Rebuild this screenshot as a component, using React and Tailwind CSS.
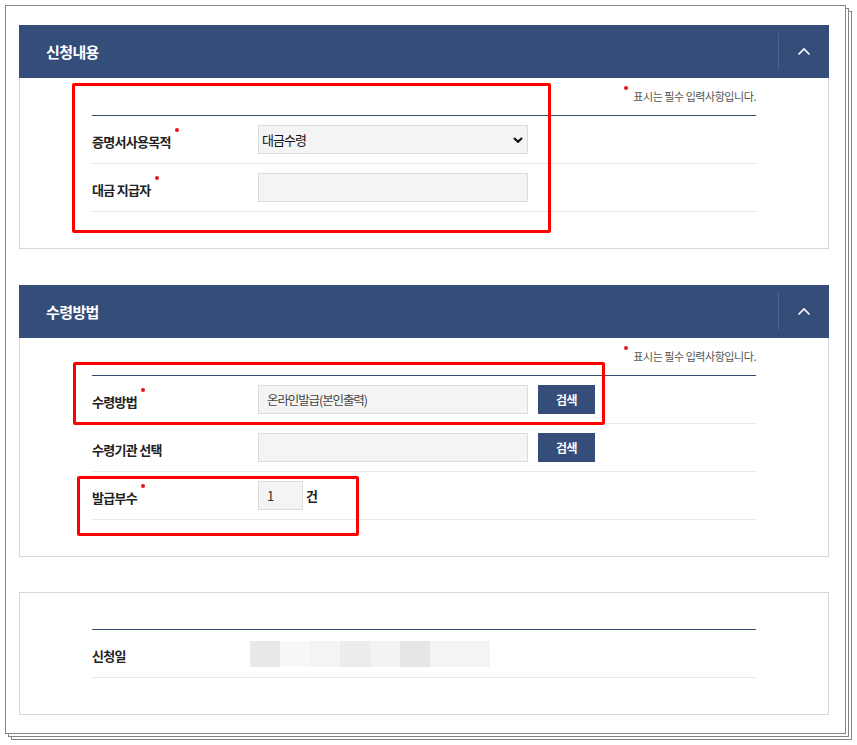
import React from "react";

const Dot = () => (
  <span className="absolute left-full ml-[4px] top-[-6px] w-[4px] h-[4px] rounded-full bg-[#e8141b]" />
);

function Label({ children, required, w = "w-[166px]" }) {
  return (
    <div className={`${w} shrink-0`}>
      <span className="relative inline-block text-[13px] leading-[16px] font-bold text-[#222] tracking-[-0.7px]">
        {children}
        {required && <Dot />}
      </span>
    </div>
  );
}

function Header({ title }) {
  return (
    <div className="h-[53px] bg-[#344d79] flex items-center">
      <div className="flex-1 pl-[27px] text-white font-bold text-[15px] tracking-[-0.6px] leading-[20px]">{title}</div>
      <div className="w-[51px] h-[37px] border-l border-[#4d6390] flex items-center justify-center">
        <svg width="14" height="9" viewBox="0 0 14 9" fill="none">
          <path d="M1.5 7.5 L7 2 L12.5 7.5" stroke="#fff" strokeWidth="1.6" />
        </svg>
      </div>
    </div>
  );
}

function Note() {
  return (
    <div className="h-[13px] mb-3 flex justify-end items-center">
      <span className="relative text-[11px] leading-[13px] text-[#555] tracking-[-0.45px]">
        <span className="absolute left-[-9px] top-[-4px] w-[4px] h-[4px] rounded-full bg-[#e8141b]" />
        표시는 필수 입력사항입니다.
      </span>
    </div>
  );
}

function Row({ children }) {
  return <div className="h-[48px] flex items-center border-b border-[#e9e9e9]">{children}</div>;
}

const boxCls = "h-[29px] bg-[#f4f4f4] border border-[#dcdcdc] outline-none";

function Btn() {
  return (
    <button className="ml-[10px] w-[57px] h-[29px] bg-[#344d79] text-white text-[12px] font-bold tracking-[-0.5px]">
      검색
    </button>
  );
}

export default function App() {
  return (
    <div className="relative w-[857px] h-[745px] bg-white overflow-hidden pt-[5px] pl-[5px] font-['Noto_Sans_CJK_KR',sans-serif]">
      <div className="w-[841px] h-[729px] bg-white border border-[#858585] shadow-[3px_3px_0_-1px_#fff,3px_3px_0_0_#858585,6px_6px_0_-1px_#fff,6px_6px_0_0_#858585] pt-[19px] pl-[13px]">
        <div className="w-[810px]">
          {/* 신청내용 */}
          <Header title="신청내용" />
          <div className="border-x border-b border-[#d7d7d7] px-[72px] pt-3 pb-[36px]">
            <Note />
            <div className="border-t border-[#344d79]">
              <Row>
                <Label required>증명서사용목적</Label>
                <div className="relative w-[270px]">
                  <select className={`${boxCls} w-[270px] appearance-none pl-[3px] text-[13px] tracking-[-1px] text-[#111]`} defaultValue="대금수령">
                    <option>대금수령</option>
                  </select>
                  <svg className="absolute right-[5px] top-[12px] pointer-events-none" width="10" height="6" viewBox="0 0 10 6" fill="none">
                    <path d="M1 1 L5 4.8 L9 1" stroke="#111" strokeWidth="2.2" />
                  </svg>
                </div>
              </Row>
              <Row>
                <Label required>대금 지급자</Label>
                <input className={`${boxCls} w-[270px] px-2`} />
              </Row>
            </div>
          </div>

          {/* 수령방법 */}
          <div className="mt-[36px]">
            <Header title="수령방법" />
            <div className="border-x border-b border-[#d7d7d7] px-[72px] pt-3 pb-[36px]">
              <Note />
              <div className="border-t border-[#344d79]">
                <Row>
                  <Label required>수령방법</Label>
                  <input className={`${boxCls} w-[270px] pl-[8px] text-[12.5px] tracking-[-1.1px] text-[#444]`} defaultValue="온라인발급(본인출력)" readOnly />
                  <Btn />
                </Row>
                <Row>
                  <Label>수령기관 선택</Label>
                  <input className={`${boxCls} w-[270px] pl-[8px]`} readOnly />
                  <Btn />
                </Row>
                <Row>
                  <Label required>발급부수</Label>
                  <input className={`${boxCls} w-[45px] pl-[8px] text-[13px] text-[#333]`} defaultValue="1" />
                  <span className="ml-[3px] text-[13px] font-bold text-[#222] leading-[16px]">건</span>
                </Row>
              </div>
            </div>
          </div>

          {/* 신청일 */}
          <div className="mt-[35px] border border-[#d7d7d7] px-[72px] pt-[36px] pb-[36px]">
            <div className="border-t border-[#344d79]">
              <Row>
                <Label w="w-[158px]">신청일</Label>
                <div className="flex h-[26px]">
                  <div className="w-[30px] bg-[#e8e8e8]" />
                  <div className="w-[30px] bg-[#f8f8f8]" />
                  <div className="w-[30px] bg-[#f4f4f4]" />
                  <div className="w-[30px] bg-[#ececec]" />
                  <div className="w-[30px] bg-[#f4f3f2]" />
                  <div className="w-[30px] bg-[#e6e6e6]" />
                  <div className="w-[30px] bg-[#f5f4f3]" />
                  <div className="w-[30px] bg-[#f3f4f6]" />
                </div>
              </Row>
            </div>
          </div>
        </div>
      </div>

      {/* red annotation boxes */}
      <div className="absolute left-[72px] top-[83px] w-[479px] h-[150px] border-[3px] border-[#ff0000] rounded-[2px]" />
      <div className="absolute left-[73px] top-[362px] w-[532px] h-[63px] border-[3px] border-[#ff0000] rounded-[2px]" />
      <div className="absolute left-[77px] top-[476px] w-[282px] h-[60px] border-[3px] border-[#ff0000] rounded-[2px]" />
    </div>
  );
}
